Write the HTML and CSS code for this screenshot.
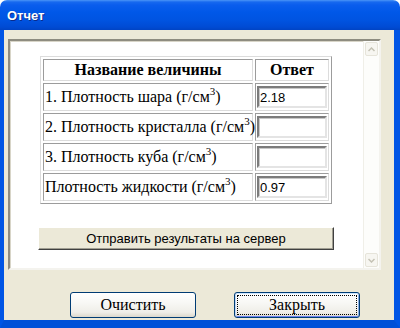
FILE: index.html
```html
<!DOCTYPE html>
<html lang="ru">
<head>
  <meta charset="UTF-8">
  <title>Отчет</title>
  <link rel="stylesheet" href="styles.css">
</head>
<body>
  <div class="window">
    <!-- Title bar -->
    <div class="titlebar">
      <span class="title">Отчет</span>
    </div>

    <!-- Window body with blue frame -->
    <div class="frame">
      <div class="client">
        <!-- Scrollable report panel -->
        <div class="panel">
          <div class="panel-content">
            <table class="results">
              <tr>
                <th class="name-col">Название величины</th>
                <th class="answer-col">Ответ</th>
              </tr>
              <tr>
                <td>1. Плотность шара (г/см<sup>3</sup>)</td>
                <td><input type="text" class="answer" value="2.18"></td>
              </tr>
              <tr>
                <td>2. Плотность кристалла (г/см<sup>3</sup>)</td>
                <td><input type="text" class="answer" value=""></td>
              </tr>
              <tr>
                <td>3. Плотность куба (г/см<sup>3</sup>)</td>
                <td><input type="text" class="answer" value=""></td>
              </tr>
              <tr>
                <td>Плотность жидкости (г/см<sup>3</sup>)</td>
                <td><input type="text" class="answer" value="0.97"></td>
              </tr>
            </table>
            <button class="send-btn">Отправить результаты на сервер</button>
          </div>

          <!-- Disabled scrollbar -->
          <div class="scrollbar">
            <div class="scroll-arrow">
              <svg width="7" height="5" viewBox="0 0 7 5"><path d="M0.5 4 L3.5 1 L6.5 4" fill="none" stroke="#c4c2b4" stroke-width="1.5"/></svg>
            </div>
            <div class="scroll-arrow">
              <svg width="7" height="5" viewBox="0 0 7 5"><path d="M0.5 1 L3.5 4 L6.5 1" fill="none" stroke="#c4c2b4" stroke-width="1.5"/></svg>
            </div>
          </div>
        </div>

        <!-- Dialog buttons -->
        <div class="actions">
          <button class="xp-btn">Очистить</button>
          <button class="xp-btn focused"><span class="focus-ring">Закрыть</span></button>
        </div>
      </div>
    </div>
  </div>
</body>
</html>
```

FILE: styles.css
```css
/* Basic reset */
* {
  margin: 0;
  padding: 0;
  box-sizing: border-box;
}

body {
  background-color: #fff;
  width: 400px;
  height: 328px;
  overflow: hidden;
}

/* Window shell */
.window {
  width: 400px;
  height: 328px;
  display: flex;
  flex-direction: column;
}

/* XP style title bar */
.titlebar {
  height: 30px;
  border-radius: 7px 7px 0 0;
  background: linear-gradient(to bottom, #4a95f7 0, #1769ef 2px, #0a5ded 5px, #0058e8 12px, #0054e1 20px, #004bd4 27px, #0044c4 30px);
  display: flex;
  align-items: center;
  padding-left: 7px;
}

.title {
  font-family: "Liberation Sans", Arial, sans-serif;
  font-weight: bold;
  font-size: 13px;
  color: #fff;
  text-shadow: 1px 1px 0 #0a2b8c;
}

/* Blue frame around the client area */
.frame {
  flex: 1;
  display: flex;
  background-color: #0055e5;
  border-left: 4px solid #0055e5;
  border-right: 6px solid #0055e5;
  border-bottom: 8px solid #0050d8;
  box-shadow: inset 1px 0 0 #0831d9, inset -1px 0 0 #0831d9, inset 0 -1px 0 #0831d9;
}

.client {
  flex: 1;
  background-color: #ece9d8;
  padding: 9px 0 0 4px;
}

/* Sunken white panel */
.panel {
  width: 373px;
  height: 231px;
  background-color: #fff;
  border: 2px solid;
  border-color: #8e8c80 #f4f3ee #f4f3ee #8e8c80;
  box-shadow: inset 1px 1px 0 #d8d5c8;
  display: flex;
}

.panel-content {
  flex: 1;
  padding: 15px 0 0 30px;
}

/* Results table */
.results {
  table-layout: fixed;
  width: 292px;
  border-collapse: separate;
  border-spacing: 2px;
  border: 1px solid;
  border-color: #dcdcdc #9c9c9c #9c9c9c #dcdcdc;
  font-family: "Liberation Serif", "Times New Roman", serif;
  font-size: 16px;
  color: #000;
}

.results th,
.results td {
  border: 1px solid;
  border-color: #9c9c9c #dcdcdc #dcdcdc #9c9c9c;
  padding: 1px;
  height: 28px;
  white-space: nowrap;
  line-height: 18px;
}

.results th {
  height: 22px;
  font-weight: bold;
  text-align: center;
}

.name-col {
  width: 210px;
}

.answer-col {
  width: 74px;
}

.results sup {
  font-size: 11px;
  line-height: 0;
  vertical-align: 7px;
}

/* Answer inputs */
.answer {
  display: block;
  width: 70px;
  height: 22px;
  font-family: "Liberation Sans", Arial, sans-serif;
  font-size: 13px;
  color: #000;
  padding-left: 1px;
  border: 2px solid;
  border-color: #7c7c7c #e4e4e4 #e4e4e4 #7c7c7c;
  box-shadow: inset 1px 1px 0 #c8c8c8;
  outline: none;
}

/* Classic send button */
.send-btn {
  display: block;
  width: 296px;
  height: 23px;
  margin: 23px 0 0 -2px;
  background-color: #ece9d8;
  font-family: "Liberation Sans", Arial, sans-serif;
  font-size: 13px;
  color: #000;
  border: 1px solid;
  border-color: #fff #404040 #404040 #fff;
  box-shadow: inset -1px -1px 0 #a09e92;
}

/* Disabled scrollbar */
.scrollbar {
  width: 16px;
  display: flex;
  flex-direction: column;
  justify-content: space-between;
  padding: 1px 2px 1px 1px;
  background-color: #fdfdfb;
  border-left: 1px solid #f0efe8;
}

.scroll-arrow {
  width: 13px;
  height: 14px;
  border: 1px solid #e6e4da;
  border-radius: 2px;
  background-color: #f7f6f1;
  display: flex;
  align-items: center;
  justify-content: center;
}

/* Dialog buttons row */
.actions {
  display: flex;
  gap: 38px;
  margin-top: 22px;
  padding-left: 62px;
}

.xp-btn {
  width: 126px;
  height: 26px;
  font-family: "Liberation Serif", "Times New Roman", serif;
  font-size: 16px;
  color: #000;
  border: 1px solid #003c74;
  border-radius: 3px;
  background: linear-gradient(to bottom, #ffffff 0, #f8f8f5 40%, #efeee8 80%, #dcd8cc 100%);
  display: flex;
  align-items: center;
  justify-content: center;
}

.xp-btn.focused {
  box-shadow: inset 0 1px 0 #cee7ff, inset 1px 0 0 #bcd4f6, inset -1px 0 0 #89ade4, inset 0 -1px 0 #6982ee;
  padding: 2px;
}

.focus-ring {
  display: flex;
  align-items: center;
  justify-content: center;
  width: 100%;
  height: 100%;
  border: 1px dotted #000;
}
```
